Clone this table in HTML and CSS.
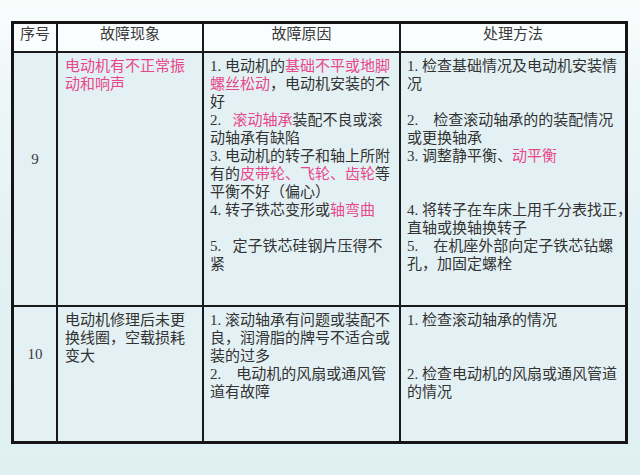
FILE: index.html
```html
<!DOCTYPE html>
<html lang="zh">
<head>
<meta charset="utf-8">
<link rel="stylesheet" href="styles.css">
</head>
<body>
<div class="page">
  <div class="grid">
    <div class="cell head">序号</div>
    <div class="cell head">故障现象</div>
    <div class="cell head">故障原因</div>
    <div class="cell head">处理方法</div>

    <div class="cell num n9">9</div>
    <div class="cell text c2">
      <p class="ln hl">电动机有不正常振</p>
      <p class="ln hl">动和响声</p>
    </div>
    <div class="cell text">
      <p class="ln">1. 电动机的<span class="hl">基础不平或地脚</span></p>
      <p class="ln"><span class="hl">螺丝松动</span>，电动机安装的不</p>
      <p class="ln">好</p>
      <p class="ln">2.&nbsp;&nbsp;&nbsp;<span class="hl">滚动轴承</span>装配不良或滚</p>
      <p class="ln">动轴承有缺陷</p>
      <p class="ln">3. 电动机的转子和轴上所附</p>
      <p class="ln">有的<span class="hl">皮带轮、飞轮、齿轮</span>等</p>
      <p class="ln">平衡不好（偏心）</p>
      <p class="ln">4. 转子铁芯变形或<span class="hl">轴弯曲</span></p>
      <p class="ln"></p>
      <p class="ln">5.&nbsp;&nbsp;&nbsp;定子铁芯硅钢片压得不</p>
      <p class="ln">紧</p>
    </div>
    <div class="cell text">
      <p class="ln">1. 检查基础情况及电动机安装情</p>
      <p class="ln">况</p>
      <p class="ln"></p>
      <p class="ln">2.&nbsp;&nbsp;&nbsp;&nbsp;检查滚动轴承的的装配情况</p>
      <p class="ln">或更换轴承</p>
      <p class="ln">3. 调整静平衡、<span class="hl">动平衡</span></p>
      <p class="ln"></p>
      <p class="ln"></p>
      <p class="ln">4. 将转子在车床上用千分表找正，</p>
      <p class="ln">直轴或换轴换转子</p>
      <p class="ln">5.&nbsp;&nbsp;&nbsp;&nbsp;在机座外部向定子铁芯钻螺</p>
      <p class="ln">孔，加固定螺栓</p>
    </div>

    <div class="cell num n10">10</div>
    <div class="cell text c2">
      <p class="ln">电动机修理后未更</p>
      <p class="ln">换线圈，空载损耗</p>
      <p class="ln">变大</p>
    </div>
    <div class="cell text">
      <p class="ln">1. 滚动轴承有问题或装配不</p>
      <p class="ln">良，润滑脂的牌号不适合或</p>
      <p class="ln">装的过多</p>
      <p class="ln">2.&nbsp;&nbsp;&nbsp;&nbsp;电动机的风扇或通风管</p>
      <p class="ln">道有故障</p>
    </div>
    <div class="cell text">
      <p class="ln">1. 检查滚动轴承的情况</p>
      <p class="ln"></p>
      <p class="ln"></p>
      <p class="ln">2. 检查电动机的风扇或通风管道</p>
      <p class="ln">的情况</p>
    </div>
  </div>
</div>
</body>
</html>
```

FILE: styles.css
```css
html, body {
  margin: 0;
  padding: 0;
}
body {
  width: 640px;
  height: 475px;
  overflow: hidden;
  background: linear-gradient(180deg, #fbfdfd 0px, #eef7f8 80px, #e3f1f4 250px, #dff0f3 475px);
  font-family: "Liberation Serif", "Noto Sans CJK SC", serif;
  font-size: 15px;
  color: #333;
}
.page {
  padding: 21px 0 0 11px;
}
.grid {
  display: grid;
  width: 611px;
  grid-template-columns: 42px 144px 195px 224px;
  grid-template-rows: 27px 252px 134px;
  gap: 2px;
  border: 3px solid #151515;
  background: #1a1a1a;
}
.cell {
  background: #e4f1f4;
  line-height: 18px;
  white-space: nowrap;
}
.head {
  background: #fafdfd;
  text-align: center;
  padding-top: 1px;
  color: #3a3a3a;
}
.num {
  display: flex;
  align-items: center;
  justify-content: center;
  padding-bottom: 40px;
  color: #3a3a3a;
}
.text {
  padding: 4px 0 0 6px;
}
.text.c2 {
  padding-left: 7px;
}
.ln {
  margin: 0;
  height: 18px;
  color: #333;
}
.hl {
  color: #e8478b;
}
```
